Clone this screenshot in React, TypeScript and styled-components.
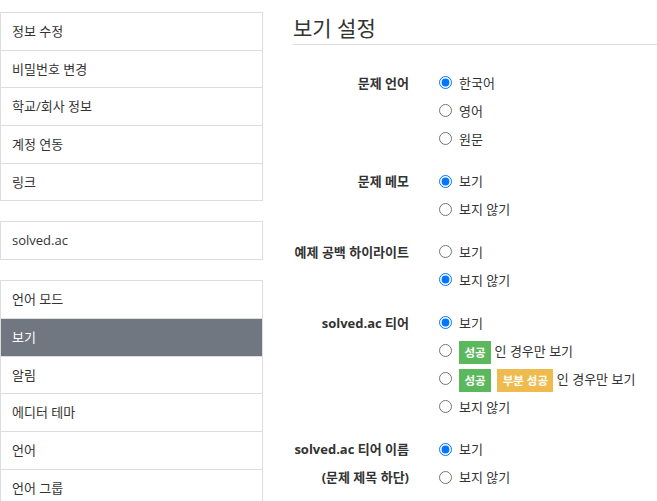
import React, { useState } from "react"
import styled, { createGlobalStyle } from "styled-components"

const GlobalStyle = createGlobalStyle`
  body {
    margin: 0;
    font-family: "Open Sans", "Noto Sans CJK KR", sans-serif;
    font-size: 13px;
    color: #333;
    background: #fff;
  }
`

type Option = {
  value: string
  label: React.ReactNode
}

type Setting = {
  key: string
  title: React.ReactNode
  options: Option[]
  initial: string
}

const menuGroups: string[][] = [
  ["정보 수정", "비밀번호 변경", "학교/회사 정보", "계정 연동", "링크"],
  ["solved.ac"],
  ["언어 모드", "보기", "알림", "에디터 테마", "언어", "언어 그룹"],
]

const settings: Setting[] = [
  {
    key: "lang",
    title: "문제 언어",
    initial: "ko",
    options: [
      { value: "ko", label: "한국어" },
      { value: "en", label: "영어" },
      { value: "orig", label: "원문" },
    ],
  },
  {
    key: "memo",
    title: "문제 메모",
    initial: "show",
    options: [
      { value: "show", label: "보기" },
      { value: "hide", label: "보지 않기" },
    ],
  },
  {
    key: "highlight",
    title: "예제 공백 하이라이트",
    initial: "hide",
    options: [
      { value: "show", label: "보기" },
      { value: "hide", label: "보지 않기" },
    ],
  },
  {
    key: "tier",
    title: "solved.ac 티어",
    initial: "show",
    options: [
      { value: "show", label: "보기" },
      {
        value: "ac",
        label: (
          <>
            <Badge kind="success">성공</Badge> 인 경우만 보기
          </>
        ),
      },
      {
        value: "partial",
        label: (
          <>
            <Badge kind="success">성공</Badge>
            <Badge kind="warning">부분 성공</Badge> 인 경우만 보기
          </>
        ),
      },
      { value: "hide", label: "보지 않기" },
    ],
  },
  {
    key: "tierName",
    title: (
      <>
        solved.ac 티어 이름
        <br />
        (문제 제목 하단)
      </>
    ),
    initial: "show",
    options: [
      { value: "show", label: "보기" },
      { value: "hide", label: "보지 않기" },
    ],
  },
]

function Badge(props: { kind: "success" | "warning"; children: React.ReactNode }) {
  return <S.Badge $kind={props.kind}>{props.children}</S.Badge>
}

const App: React.FC = () => {
  const [values, setValues] = useState<Record<string, string>>(() =>
    Object.fromEntries(settings.map((s) => [s.key, s.initial]))
  )

  return (
    <>
      <GlobalStyle />
      <S.Page>
        <S.Sidebar>
          {menuGroups.map((group, gi) => (
            <S.ListGroup key={gi}>
              {group.map((item) => (
                <S.ListItem key={item} $active={item === "보기"}>
                  {item}
                </S.ListItem>
              ))}
            </S.ListGroup>
          ))}
        </S.Sidebar>
        <S.Main>
          <S.Heading>보기 설정</S.Heading>
          <S.Form>
            {settings.map((setting) => (
              <S.Group key={setting.key}>
                <S.Label>{setting.title}</S.Label>
                <S.Options>
                  {setting.options.map((opt) => (
                    <S.OptionRow key={opt.value}>
                      <S.Radio
                        type="radio"
                        name={setting.key}
                        checked={values[setting.key] === opt.value}
                        onChange={() => setValues({ ...values, [setting.key]: opt.value })}
                      />
                      <S.OptionText>{opt.label}</S.OptionText>
                    </S.OptionRow>
                  ))}
                </S.Options>
              </S.Group>
            ))}
          </S.Form>
        </S.Main>
      </S.Page>
    </>
  )
}

const S = {
  Page: styled.div`
    display: flex;
    gap: 30px;
    padding-top: 12px;
  `,
  Sidebar: styled.div`
    width: 263px;
    flex-shrink: 0;
    display: flex;
    flex-direction: column;
    gap: 20px;
  `,
  ListGroup: styled.div`
    border: 1px solid #ddd;
  `,
  ListItem: styled.div<{ $active: boolean }>`
    height: 36.7px;
    line-height: 36.7px;
    padding: 0 11px;
    color: ${({ $active }) => ($active ? "#fff" : "#333")};
    background: ${({ $active }) => ($active ? "#707780" : "#fff")};
    & + & {
      border-top: 1px solid #ddd;
    }
  `,
  Main: styled.div`
    flex: 1;
    min-width: 0;
  `,
  Heading: styled.h3`
    margin: 5px 0 0;
    font-size: 21px;
    font-weight: 400;
    line-height: 22px;
    padding-bottom: 5px;
    border-bottom: 1px solid #ddd;
    color: #333;
  `,
  Form: styled.div`
    padding-top: 23.5px;
  `,
  Group: styled.div`
    display: grid;
    grid-template-columns: 116px 1fr;
    column-gap: 30px;
    margin-bottom: 14.7px;
  `,
  Label: styled.div`
    text-align: right;
    font-weight: 700;
    line-height: 28px;
    color: #333;
  `,
  Options: styled.div`
    display: flex;
    flex-direction: column;
  `,
  OptionRow: styled.label`
    display: flex;
    align-items: center;
    height: 28px;
    gap: 7px;
    white-space: nowrap;
  `,
  Radio: styled.input`
    width: 13px;
    height: 13px;
    margin: 0;
    flex-shrink: 0;
  `,
  OptionText: styled.span`
    line-height: 28px;
  `,
  Badge: styled.span<{ $kind: "success" | "warning" }>`
    display: inline-block;
    padding: 0 5.5px;
    margin-right: 6px;
    height: 23px;
    line-height: 23px;
    font-size: 11.5px;
    font-weight: 700;
    color: #fff;
    vertical-align: middle;
    background: ${({ $kind }) => ($kind === "success" ? "#5cb85c" : "#f0bb4e")};
    &:last-of-type {
      margin-right: 0;
    }
  `,
}

export default App
